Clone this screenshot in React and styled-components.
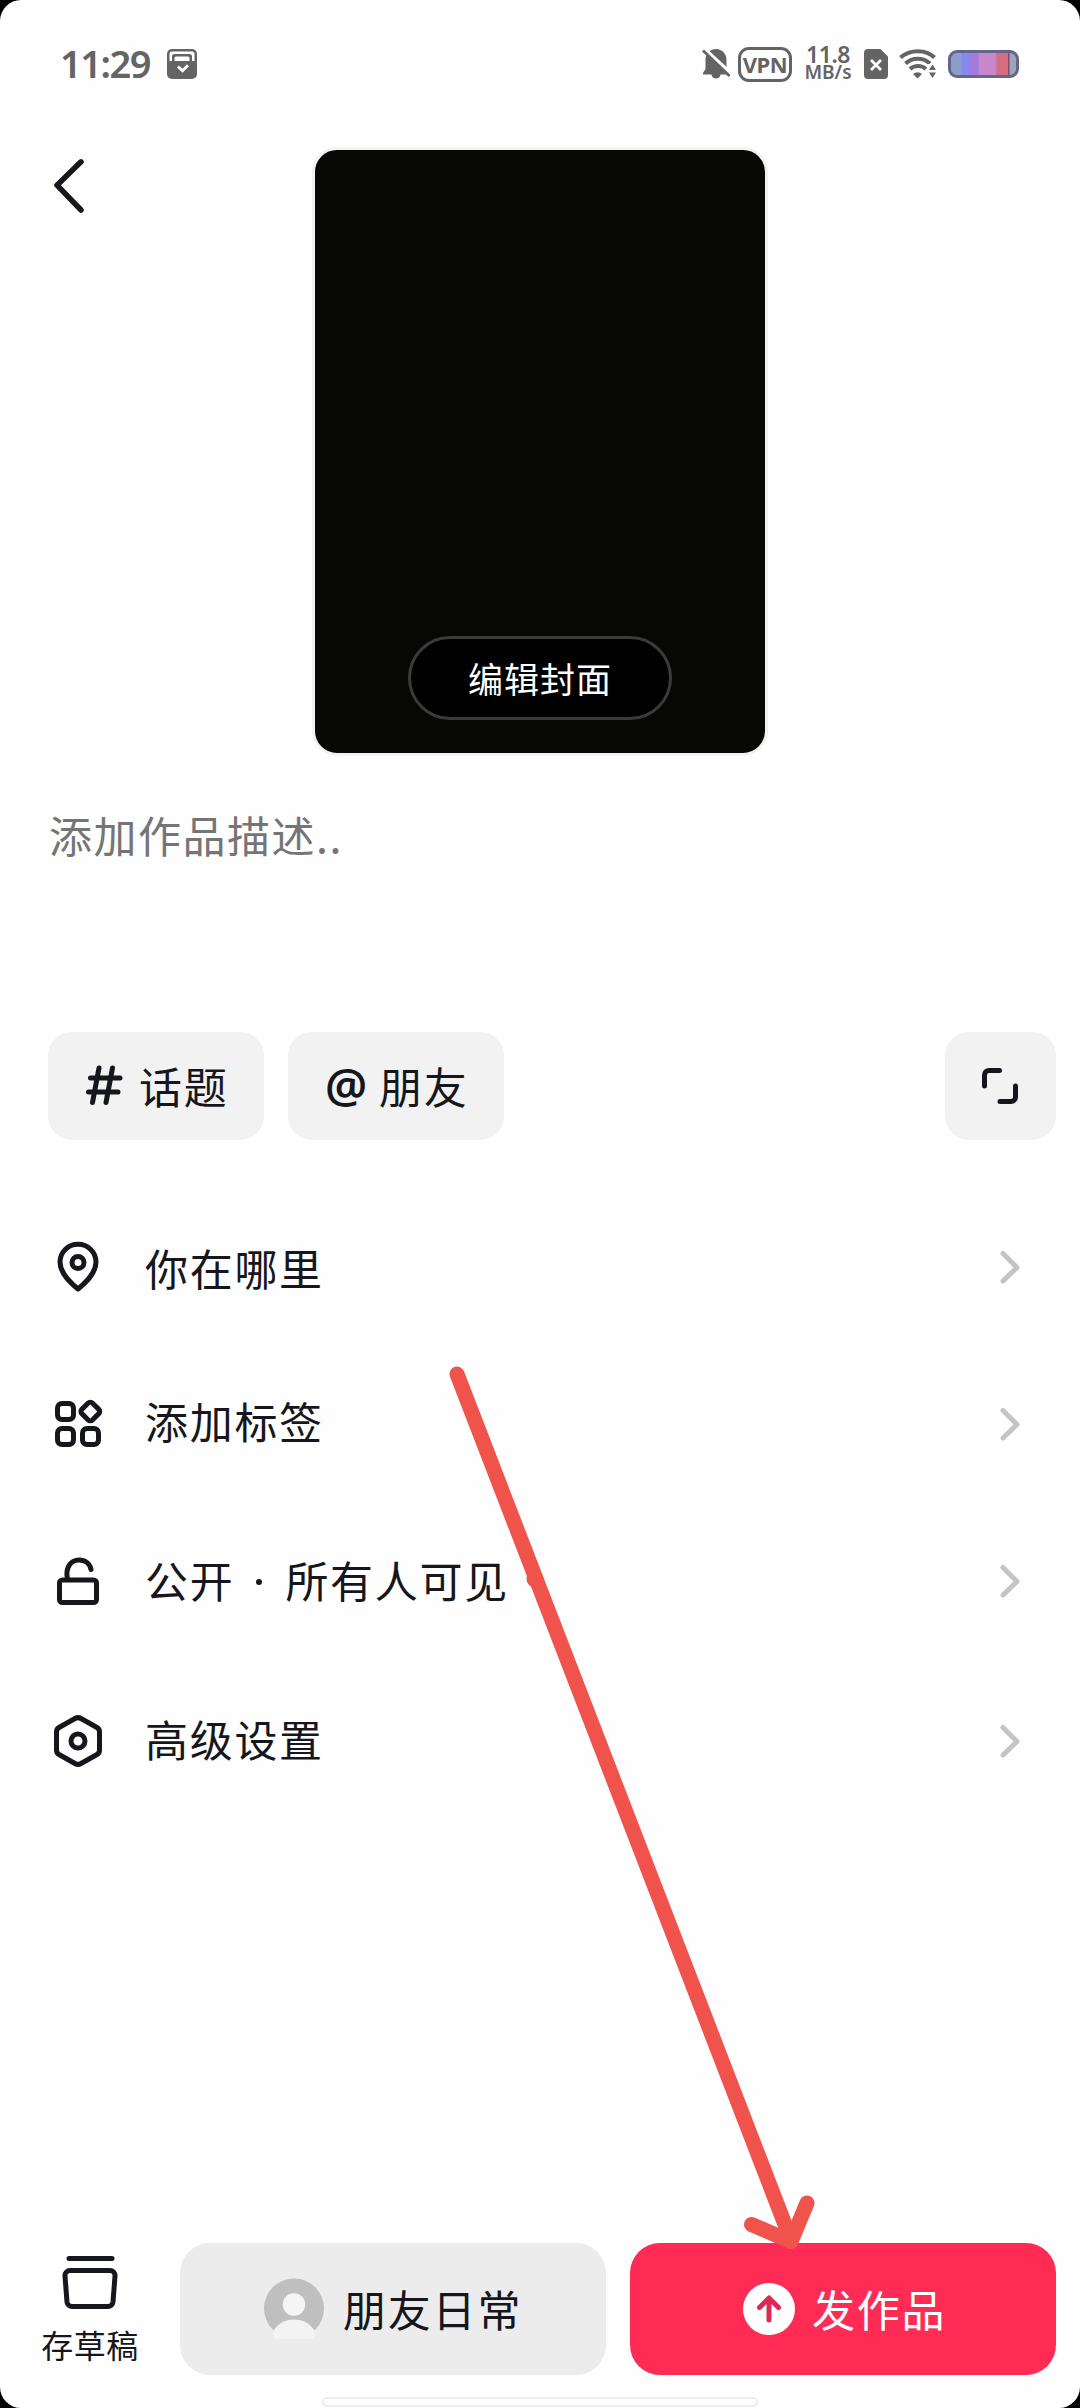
import React from 'react';
import styled, { createGlobalStyle } from 'styled-components';

const GlobalStyle = createGlobalStyle`
  * {
    box-sizing: border-box;
  }
  body {
    margin: 0;
    background-color: #000;
  }
`;

const Screen = styled.div`
  position: relative;
  display: flex;
  flex-direction: column;
  width: 1080px;
  height: 2408px;
  background-color: #fefefe;
  border-radius: 21px;
  overflow: hidden;
  color: #16171c;
  font-family: 'Noto Sans CJK SC', 'Noto Sans', sans-serif;
`;

const StatusBar = styled.div`
  display: flex;
  align-items: center;
  justify-content: space-between;
  height: 128px;
  padding: 0 61px 0 60px;
  color: #646464;
  font-family: 'Noto Sans', sans-serif;
`;
const StatusGroup = styled.div`
  display: flex;
  align-items: center;
`;
const Clock = styled.span`
  width: 107px;
  padding-bottom: 2px;
  font-size: 38px;
  line-height: 50px;
  font-weight: 600;
  letter-spacing: -1.5px;
`;
const Vpn = styled.span`
  display: flex;
  align-items: center;
  justify-content: center;
  width: 54px;
  height: 35px;
  margin: 0 11px 0 8px;
  border: 3px solid #646464;
  border-radius: 11px;
  font-size: 22px;
  font-weight: 700;
  letter-spacing: -0.5px;
`;
const Speed = styled.span`
  display: flex;
  flex-direction: column;
  align-items: center;
  width: 50px;
  margin-right: 11px;
  font-weight: 600;
`;
const SpeedValue = styled.span`
  font-size: 23px;
  line-height: 17px;
  letter-spacing: -0.4px;
`;
const SpeedUnit = styled.span`
  font-size: 19px;
  line-height: 19px;
`;
const Wifi = styled.svg`
  margin: 0 11px;
`;
const Battery = styled.span`
  width: 71px;
  height: 28px;
  border: 3px solid #62668a;
  border-radius: 9px;
  background: linear-gradient(
    90deg,
    #8f9ccb 0 15%,
    #8388f4 17% 25%,
    #a07be0 30% 41%,
    #c687cb 44% 67%,
    #d56c80 72% 87%,
    #7c4a72 88% 89%,
    #a0a2b8 91%
  );
`;

const Header = styled.header`
  display: grid;
  grid-template-columns: 312px 456px 312px;
  align-items: start;
  padding-top: 19px;
`;
const BackButton = styled.button`
  display: flex;
  margin: 8px 0 0 48px;
  padding: 0;
  border: none;
  background: none;
  color: #16171c;
`;
const Cover = styled.div`
  display: flex;
  align-items: flex-end;
  justify-content: center;
  height: 609px;
  padding-bottom: 33px;
  border: 3px solid #f2f2f2;
  border-radius: 25px;
  background: #070706;
`;
const EditCover = styled.button`
  width: 264px;
  height: 84px;
  padding: 0 0 1px;
  border: 3px solid #3a3a3a;
  border-radius: 42px;
  background-color: #020101;
  color: #fff;
  font-family: inherit;
  font-size: 35px;
  letter-spacing: 1px;
`;

const Description = styled.div`
  height: 226px;
  margin-top: 50px;
  padding-left: 49px;
  color: #757575;
  font-size: 43px;
  line-height: 56px;
  letter-spacing: 1.5px;
`;

const Tools = styled.div`
  display: flex;
  gap: 24px;
  height: 108px;
  padding: 0 24px 0 48px;
`;
const Chip = styled.button`
  display: flex;
  align-items: center;
  width: 216px;
  padding: 0 0 2px 37px;
  border: none;
  border-radius: 24px;
  background-color: #f2f2f3;
  color: #16171c;
  font-family: inherit;
  font-size: 43px;
  letter-spacing: 1.8px;
`;
const ChipMark = styled.span`
  display: flex;
  width: ${(props) => props.$width}px;
  font-family: 'Noto Sans', sans-serif;
  font-size: 47px;
  line-height: 50px;
  font-weight: 600;
  letter-spacing: 0;
`;
const ExpandButton = styled.button`
  display: flex;
  align-items: center;
  justify-content: center;
  width: 111px;
  margin-left: auto;
  padding: 0 2px 0 0;
  border: none;
  border-radius: 24px;
  background-color: #f2f2f3;
  color: #16171c;
`;

const Options = styled.div`
  margin-top: 48px;
`;
const Option = styled.div`
  display: flex;
  align-items: center;
  height: 157px;
  padding: 0 58px 0 48px;
  &:last-child {
    height: 163px;
  }
`;
const OptionLabel = styled.span`
  flex: 1;
  margin-left: 37px;
  padding-bottom: ${(props) => props.$lift}px;
  font-size: 43px;
  line-height: 60px;
  letter-spacing: 1.7px;
  white-space: pre;
`;
const Dot = styled.span`
  display: inline-block;
  width: 6px;
  height: 6px;
  margin: 0 23px 13px 22px;
  border-radius: 50%;
  background-color: #16171c;
`;

const Footer = styled.footer`
  display: flex;
  height: 132px;
  margin-top: auto;
  padding-right: 24px;
`;
const Draft = styled.div`
  display: flex;
  flex-direction: column;
  align-items: center;
  width: 180px;
  padding-top: 10px;
  font-size: 32px;
  line-height: 44px;
  letter-spacing: 0.5px;
`;
const DraftLabel = styled.span`
  margin-top: 11px;
`;
const ActionButton = styled.button`
  display: flex;
  align-items: center;
  width: 426px;
  height: 132px;
  padding: 0 0 0 ${(props) => (props.$primary ? 113 : 84)}px;
  border: none;
  border-radius: 30px;
  background-color: ${(props) => (props.$primary ? '#fe2c55' : '#ececed')};
  color: ${(props) => (props.$primary ? '#fff' : '#16171c')};
  font-family: inherit;
  font-size: 43px;
  letter-spacing: 1.8px;
  & + & {
    margin-left: 24px;
  }
`;
const ActionText = styled.span`
  margin-left: ${(props) => props.$gap}px;
  padding-bottom: 3px;
`;
const HomeBar = styled.div`
  width: 436px;
  height: 10px;
  margin: 22px auto 1px;
  border: 2px solid #ececee;
  border-radius: 5px;
  background-color: #fff;
`;

// hand drawn pointer over the page
const Pointer = styled.svg`
  position: absolute;
  left: 0;
  top: 0;
  pointer-events: none;
`;

const line = {
  fill: 'none',
  stroke: 'currentColor',
  strokeWidth: 5,
  strokeLinecap: 'round',
  strokeLinejoin: 'round',
};

const TaskIcon = () => (
  <svg width="30" height="30" viewBox="0 0 30 30">
    <rect width="30" height="30" rx="5" fill="#646464" />
    <path d="M2.500 12V5a2.500 2.500 0 0 1 2.500-2.500h20a2.500 2.500 0 0 1 2.500 2.500v7h-2.500V7.500a2.500 2.500 0 0 0-2.500-2.500H7.500A2.500 2.500 0 0 0 5 7.500V12z" fill="#fff" />
    <path d="M7.500 12V9a1.500 1.500 0 0 1 1.500-1.500h12A1.500 1.500 0 0 1 22.500 9v3" fill="#fff" />
    <path d="M11 17.500l4.500 4.300 5.500-5.500" fill="none" stroke="#fff" strokeWidth="2.800" />
  </svg>
);

const BellOffIcon = () => (
  <svg width="28" height="32" viewBox="0 0 28 32">
    <path d="M14 1c6.500 0 10.500 5 10.500 11v9l2.500 4v1.500H1V25l2.500-4v-9C3.500 6 7.500 1 14 1z" fill="#646464" />
    <path d="M9.500 26h9c0 6-9 6-9 0z" fill="#646464" />
    <path d="M0-1L29.500 26" stroke="#fefefe" strokeWidth="4" />
    <path d="M1 2.500l26.500 25.500" stroke="#646464" strokeWidth="2.800" />
  </svg>
);

const SimIcon = () => (
  <svg width="24" height="30" viewBox="0 0 24 30">
    <path d="M4 0h12.500L24 7.500V26a4 4 0 0 1-4 4H4a4 4 0 0 1-4-4V4a4 4 0 0 1 4-4z" fill="#646464" />
    <path d="M7 11l10 10M17 11L7 21" stroke="#fff" strokeWidth="2.800" />
  </svg>
);

const WifiIcon = () => (
  <Wifi width="38" height="30" viewBox="0 0 38 30">
    <g fill="none" stroke="#646464" strokeWidth="4">
      <path d="M1.500 8.500c9.500-8.500 25.500-8.500 34 0" />
      <path d="M6.500 14.500c7-6.500 17.500-6.500 24.500 0" />
      <path d="M11 20c4.500-4 11.500-4 16 0" />
    </g>
    <path d="M14 25c3-2.200 6-2.200 9 0L18.500 29.500z" fill="#646464" />
    <path d="M29 15h9v15h-8z" fill="#fefefe" />
    <path d="M33.500 15.500l3.500 5.500h-7zM33.500 29l3.500-5.500h-7z" fill="#646464" />
  </Wifi>
);

const BackIcon = () => (
  <svg width="42" height="62" viewBox="48 155 42 62">
    <path {...line} strokeWidth="5.500" d="M81 161.800L57 185.200l24 24.800" />
  </svg>
);

const HashIcon = () => (
  <svg width="40" height="44" viewBox="85 1064 40 44">
    <path {...line} d="M99 1069l-6.500 34.500M112.500 1069l-6.500 34.500M90.500 1079h29.500M88.500 1093h29.500" />
  </svg>
);

const ExpandIcon = () => (
  <svg width="36" height="36" viewBox="0 0 36 36">
    <path {...line} d="M2.500 18V7a4.500 4.500 0 0 1 4.500-4.500h10.500M33.500 18v11a4.500 4.500 0 0 1-4.500 4.500H18" />
  </svg>
);

const PinIcon = () => (
  <svg width="60" height="60" viewBox="48 1237 60 60">
    <path {...line} d="M78 1289c-6-5-18-15-18-27a18 17.800 0 0 1 36 0c0 12-12 22-18 27z" />
    <circle {...line} cx="78" cy="1262.500" r="6" />
  </svg>
);

const TagsIcon = () => (
  <svg width="60" height="60" viewBox="48 1394 60 60">
    <rect {...line} x="57.500" y="1403.500" width="16" height="16" rx="4.500" />
    <rect {...line} x="57.500" y="1428.500" width="16" height="16" rx="4.500" />
    <rect {...line} x="82.500" y="1428.500" width="16" height="16" rx="4.500" />
    <rect {...line} x="82.800" y="1404" width="15" height="15" rx="3" transform="rotate(45 90.300 1411.500)" />
  </svg>
);

const UnlockIcon = () => (
  <svg width="60" height="60" viewBox="48 1550 60 60">
    <rect {...line} x="59.500" y="1579" width="37" height="22.500" rx="3" />
    <path {...line} d="M67.500 1578c-2.500-11 3-19 11.500-19 6.500 0 11 4 12 9.500" />
  </svg>
);

const SettingsIcon = () => (
  <svg width="60" height="60" viewBox="48 1711 60 60">
    <path {...line} d="M75 1718.500a6 6 0 0 1 6 0l16 9a5 5 0 0 1 2.500 4.500v18a5 5 0 0 1-2.500 4.500l-16 9a6 6 0 0 1-6 0l-16-9a5 5 0 0 1-2.500-4.500v-18a5 5 0 0 1 2.500-4.500z" />
    <circle {...line} cx="78" cy="1741" r="7" />
  </svg>
);

const ChevronIcon = () => (
  <svg width="22" height="36" viewBox="0 0 22 36">
    <path {...line} stroke="#c4c4c4" d="M3 4.500L17 18.500l-14 13.500" />
  </svg>
);

const DraftIcon = () => (
  <svg width="60" height="58" viewBox="0 0 60 58">
    <path {...line} d="M9 5.500h43M10 17.500h40a5 5 0 0 1 5 5.500l-2 26a5 5 0 0 1-5 4.500H12a5 5 0 0 1-5-4.500L5 23a5 5 0 0 1 5-5.500z" />
  </svg>
);

const AvatarIcon = () => (
  <svg width="60" height="62" viewBox="0 0 60 62">
    <circle cx="30" cy="30.500" r="30" fill="#bfbfbf" />
    <circle cx="30" cy="26.500" r="11.200" fill="#f6f5f6" />
    <path d="M8.500 54C13 46 21 41.500 30 41.500S47 46 51.500 54L49 61H11z" fill="#f4f3f4" />
  </svg>
);

const UploadIcon = () => (
  <svg width="52" height="52" viewBox="0 0 52 52">
    <circle cx="26" cy="26" r="26" fill="#fff" />
    <path {...line} stroke="#da2b57" d="M26 37V15.500M16.500 24.500L26 15l9.500 9.500" />
  </svg>
);

function App() {
  return (
    <Screen>
      <GlobalStyle />
      <StatusBar>
        <StatusGroup>
          <Clock>11:29</Clock>
          <TaskIcon />
        </StatusGroup>
        <StatusGroup>
          <BellOffIcon />
          <Vpn>VPN</Vpn>
          <Speed>
            <SpeedValue>11.8</SpeedValue>
            <SpeedUnit>MB/s</SpeedUnit>
          </Speed>
          <SimIcon />
          <WifiIcon />
          <Battery />
        </StatusGroup>
      </StatusBar>
      <Header>
        <BackButton>
          <BackIcon />
        </BackButton>
        <Cover>
          <EditCover>编辑封面</EditCover>
        </Cover>
      </Header>
      <Description>添加作品描述..</Description>
      <Tools>
        <Chip>
          <ChipMark $width={54}>
            <HashIcon />
          </ChipMark>
          话题
        </Chip>
        <Chip>
          <ChipMark $width={54}>@</ChipMark>
          朋友
        </Chip>
        <ExpandButton>
          <ExpandIcon />
        </ExpandButton>
      </Tools>
      <Options>
        <Option>
          <PinIcon />
          <OptionLabel $lift={0}>你在哪里</OptionLabel>
          <ChevronIcon />
        </Option>
        <Option>
          <TagsIcon />
          <OptionLabel $lift={8}>添加标签</OptionLabel>
          <ChevronIcon />
        </Option>
        <Option>
          <UnlockIcon />
          <OptionLabel $lift={3}>
            公开
            <Dot />
            所有人可见
          </OptionLabel>
          <ChevronIcon />
        </Option>
        <Option>
          <SettingsIcon />
          <OptionLabel $lift={6}>高级设置</OptionLabel>
          <ChevronIcon />
        </Option>
      </Options>
      <Footer>
        <Draft>
          <DraftIcon />
          <DraftLabel>存草稿</DraftLabel>
        </Draft>
        <ActionButton>
          <AvatarIcon />
          <ActionText $gap={19}>朋友日常</ActionText>
        </ActionButton>
        <ActionButton $primary>
          <UploadIcon />
          <ActionText $gap={17}>发作品</ActionText>
        </ActionButton>
      </Footer>
      <HomeBar />
      <Pointer width="1080" height="2408" viewBox="0 0 1080 2408">
        <g fill="none" stroke="#ef534c" strokeWidth="15" strokeLinecap="round" strokeLinejoin="round">
          <path d="M457 1374L791 2240" />
          <path d="M751.500 2224.500l39.500 17 16-38.500" />
        </g>
        <circle cx="535" cy="1579" r="8.500" fill="#ef534c" />
      </Pointer>
    </Screen>
  );
}

export default App;
